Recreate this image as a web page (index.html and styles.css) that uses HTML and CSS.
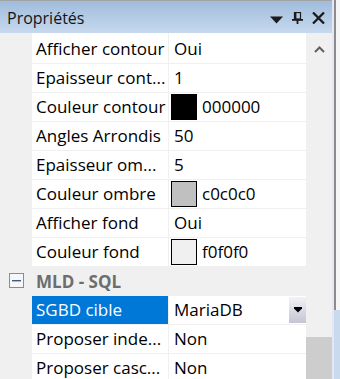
FILE: index.html
```html
<html>
    <head>
        <meta charset="utf-8">
        <title>Propriétés</title>
        <meta name="viewport" content="width=device-width, initial-scale=1.0">
        <link rel="stylesheet" href="styles.css">
    </head>
    <body>
        <div id="window">
            <div id="panel">
                <div id="titleBar">
                    <span id="title">Propriétés</span>
                    <div id="tools">
                        <svg class="tool" width="13" height="8" viewBox="0 0 13 8"><polygon points="0,0.5 13,0.5 6.5,7.5" fill="#1b1b1b"/></svg>
                        <svg class="tool" width="11" height="12" viewBox="0 0 11 12">
                            <rect x="2.5" y="0.5" width="6" height="6.5" fill="none" stroke="#1b1b1b" stroke-width="1.2"/>
                            <rect x="2" y="0" width="2.4" height="7.5" fill="#1b1b1b"/>
                            <rect x="0" y="7" width="11" height="1.8" fill="#1b1b1b"/>
                            <rect x="4.6" y="8" width="1.8" height="4" fill="#1b1b1b"/>
                        </svg>
                        <svg class="tool" width="13" height="12" viewBox="0 0 13 12"><path d="M1 0.5 L12 11.5 M12 0.5 L1 11.5" stroke="#1b1b1b" stroke-width="2.3"/></svg>
                    </div>
                </div>
                <div id="content">
                    <div id="grid">
                        <div class="row spacer"><div class="gutter"></div><div class="name"></div><div class="value"></div></div>
                        <div class="row"><div class="gutter"></div><div class="name">Afficher contour</div><div class="value">Oui</div></div>
                        <div class="row"><div class="gutter"></div><div class="name">Epaisseur cont...</div><div class="value">1</div></div>
                        <div class="row"><div class="gutter"></div><div class="name">Couleur contour</div><div class="value color"><span class="swatch black"></span>000000</div></div>
                        <div class="row"><div class="gutter"></div><div class="name">Angles Arrondis</div><div class="value">50</div></div>
                        <div class="row"><div class="gutter"></div><div class="name">Epaisseur om...</div><div class="value">5</div></div>
                        <div class="row"><div class="gutter"></div><div class="name">Couleur ombre</div><div class="value color"><span class="swatch silver"></span>c0c0c0</div></div>
                        <div class="row"><div class="gutter"></div><div class="name">Afficher fond</div><div class="value">Oui</div></div>
                        <div class="row"><div class="gutter"></div><div class="name">Couleur fond</div><div class="value color"><span class="swatch light"></span>f0f0f0</div></div>
                        <div class="category">
                            <svg width="15" height="15" viewBox="0 0 15 15"><rect x="0.5" y="0.5" width="14" height="14" fill="#f7f7f7" stroke="#8c8c8c"/><rect x="3" y="7" width="9" height="1.4" fill="#3c5a8c"/></svg>
                            <span class="categoryLabel">MLD - SQL</span>
                        </div>
                        <div class="row selected"><div class="gutter"></div><div class="name">SGBD cible</div><div class="value">MariaDB<span class="combo"><svg width="8" height="6" viewBox="0 0 8 6"><polygon points="0,0 8,0 8,1.5 4,5.5 0,1.5" fill="#000"/></svg></span></div></div>
                        <div class="row"><div class="gutter"></div><div class="name">Proposer inde...</div><div class="value">Non</div></div>
                        <div class="row"><div class="gutter"></div><div class="name">Proposer casc...</div><div class="value">Non</div></div>
                    </div>
                    <div id="scrollBar">
                        <div id="upArrow"><svg width="11" height="7" viewBox="0 0 11 7"><path d="M1 6 L5.5 1.5 L10 6" fill="none" stroke="#606060" stroke-width="2"/></svg></div>
                        <div id="thumb"></div>
                    </div>
                </div>
            </div>
            <div id="edge">
                <div id="edgeTop"></div>
                <div id="edgeBottom"></div>
            </div>
        </div>
    </body>
</html>
```

FILE: styles.css
```css
body {
    margin: 0;
    font-family: "Open Sans", sans-serif;
    font-size: 17px;
    color: #000;
    overflow: hidden;
}

#window {
    width: 340px;
    height: 379px;
    display: flex;
}

#panel {
    width: 332px;
    display: flex;
    flex-direction: column;
}

#titleBar {
    height: 33px;
    box-sizing: border-box;
    border-top: 1px solid #a4a4a4;
    background: linear-gradient(#a0bcdc, #c6d9ee);
    display: flex;
    align-items: center;
    justify-content: space-between;
    padding: 1px 7px 0 7px;
}

#title {
    font-size: 16px;
    color: #141414;
}

#tools {
    display: flex;
    align-items: flex-end;
    height: 12px;
    margin-top: 1px;
}

.tool {
    display: block;
    margin-left: 9px;
}

#content {
    flex: 1;
    display: flex;
    overflow: hidden;
}

#grid {
    width: 306px;
}

.row {
    height: 29px;
    box-sizing: border-box;
    padding-bottom: 1px;
    display: grid;
    grid-template-columns: 31px 136px 138px;
    column-gap: 1px;
    background-color: #f0f0f0;
}

.row.spacer {
    height: 2px;
    padding: 0;
}

.name, .value {
    background-color: #fff;
    line-height: 28px;
    white-space: nowrap;
    overflow: hidden;
}

.name {
    padding-left: 4px;
}

.value {
    padding-left: 5px;
    display: flex;
    align-items: center;
}

.value.color {
    padding-left: 2px;
}

.swatch {
    width: 26px;
    height: 26px;
    box-sizing: border-box;
    border: 1px solid #000;
    margin-right: 5px;
}

.swatch.black { background-color: #000; }
.swatch.silver { background-color: #c0c0c0; }
.swatch.light { background-color: #f0f0f0; }

.category {
    height: 29px;
    box-sizing: border-box;
    padding-left: 9px;
    display: flex;
    align-items: center;
    background-color: #f0f0f0;
}

.category svg {
    display: block;
    margin-top: -2px;
}

.categoryLabel {
    margin-left: 12px;
    font-weight: bold;
    color: #6d6d6d;
}

.row.selected .name {
    background-color: #0078d7;
    color: #fff;
}

.combo {
    width: 17px;
    height: 26px;
    margin-left: auto;
    margin-right: 1px;
    background: linear-gradient(#f2f2f6, #c4c4d6);
    display: flex;
    align-items: center;
    justify-content: center;
}

#scrollBar {
    width: 26px;
    background-color: #f0f0f0;
    display: flex;
    flex-direction: column;
}

#upArrow {
    height: 304px;
    box-sizing: border-box;
    padding-top: 13px;
    display: flex;
    justify-content: center;
}

#upArrow svg {
    display: block;
}

#thumb {
    flex: 1;
    background-color: #cdcdcd;
}

#edge {
    width: 8px;
    padding-left: 2px;
    box-sizing: border-box;
    background-color: #e6e6f4;
    display: flex;
    flex-direction: column;
}

#edgeTop {
    height: 310px;
    border-left: 2px solid #8c8c8c;
    background-color: #f6f6f6;
}

#edgeBottom {
    flex: 1;
    background-color: #c9daee;
}
```
